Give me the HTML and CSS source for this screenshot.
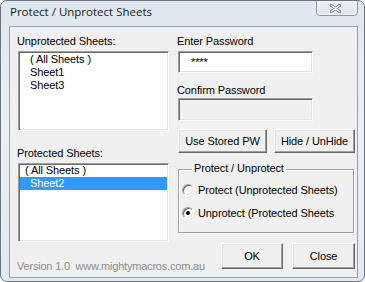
FILE: index.html
```html
<!DOCTYPE html>
<html>
<head>
<meta charset="utf-8">
<link rel="stylesheet" href="styles.css">
</head>
<body>
<div class="window">
  <div class="titlebar">
    <span class="title">Protect / Unprotect Sheets</span>
    <div class="close-x">
      <svg width="11" height="9" viewBox="0 0 11 9">
        <path d="M1.5 1.5 L9.5 7.5 M9.5 1.5 L1.5 7.5" stroke="#838c98" stroke-width="3.2" stroke-linecap="round" fill="none"/>
        <path d="M1.5 1.5 L9.5 7.5 M9.5 1.5 L1.5 7.5" stroke="#f6f8fa" stroke-width="1.4" stroke-linecap="round" fill="none"/>
      </svg>
    </div>
  </div>
  <div class="client">
    <div class="main">
      <div class="col-left">
        <div class="label">Unprotected Sheets:</div>
        <div class="listbox lb1">
          <div class="item">( All Sheets )</div>
          <div class="item">Sheet1</div>
          <div class="item">Sheet3</div>
        </div>
        <div class="label label-gap">Protected Sheets:</div>
        <div class="listbox lb2">
          <div class="item item-all">( All Sheets )</div>
          <div class="item selected">Sheet2</div>
        </div>
      </div>
      <div class="col-right">
        <div class="label">Enter Password</div>
        <div class="textbox pw">****</div>
        <div class="label label-gap2">Confirm Password</div>
        <div class="textbox confirm"></div>
        <div class="btnrow">
          <div class="btn btn-stored">Use Stored PW</div>
          <div class="btn btn-hide">Hide / UnHide</div>
        </div>
        <div class="group">
          <div class="legend">Protect / Unprotect</div>
          <div class="radio radio-first"><span class="rb"></span>Protect (Unprotected Sheets)</div>
          <div class="radio"><span class="rb checked"></span>Unprotect (Protected Sheets</div>
        </div>
      </div>
    </div>
    <div class="footer">
      <div class="version">Version 1.0 &nbsp;www.mightymacros.com.au</div>
      <div class="actions">
        <div class="btn btn-ok">OK</div>
        <div class="btn btn-close">Close</div>
      </div>
    </div>
  </div>
</div>
</body>
</html>
```
FILE: styles.css
```css
html, body {
  margin: 0;
  background: #ffffff;
}
body {
  font-family: "Liberation Sans", Arial, sans-serif;
  font-size: 11px;
  color: #000;
}
.window {
  width: 365px;
  height: 282px;
  box-sizing: border-box;
  border: 1px solid #6c747e;
  border-radius: 7px;
  background: linear-gradient(180deg, #dfe7ef 0%, #eaf0f5 45%, #e2e9f0 100%);
  display: flex;
  flex-direction: column;
  overflow: hidden;
}
.titlebar {
  height: 25px;
  flex-shrink: 0;
  display: flex;
  align-items: flex-start;
}
.title {
  font-family: "Open Sans", "Noto Sans", sans-serif;
  font-size: 11.5px;
  line-height: 22px;
  padding-left: 9px;
  color: #1b1b1b;
  white-space: nowrap;
}
.close-x {
  margin-left: auto;
  margin-right: 6px;
  margin-top: -2px;
  width: 42px;
  height: 17px;
  box-sizing: border-box;
  border: 1px solid #8c97a4;
  border-radius: 0 0 4px 4px;
  background: linear-gradient(180deg, #eef2f6, #dde4eb);
  box-shadow: inset 0 0 0 1px rgba(255,255,255,0.6);
  display: flex;
  justify-content: center;
  align-items: center;
  padding: 2px 3px 0 0;
}
.client {
  margin-left: 8px;
  width: 349px;
  height: 252px;
  box-sizing: border-box;
  border: 1px solid #97a2ae;
  background: #f0f0f0;
  padding: 7px 0 0 8px;
  letter-spacing: -0.1px;
}
.main {
  display: flex;
  gap: 9px;
}
.col-left {
  width: 151px;
}
.col-right {
  width: 177px;
}
.label {
  line-height: 14px;
  margin-left: -1px;
  white-space: nowrap;
}
.label-gap {
  margin-top: 15px;
}
.label-gap2 {
  margin-top: 10px;
}
.listbox {
  box-sizing: border-box;
  width: 151px;
  background: #fff;
  border: 1px solid;
  border-color: #a0a0a0 #ffffff #ffffff #a0a0a0;
  box-shadow: inset 1px 1px 0 #696969, inset -1px -1px 0 #e3e3e3;
  padding: 1px;
  margin-top: 3px;
}
.lb1 {
  height: 80px;
}
.lb2 {
  height: 79px;
  padding-top: 0;
}
.item {
  line-height: 13px;
  padding-left: 10px;
  white-space: nowrap;
}
.item-all {
  padding-left: 5px;
}
.selected {
  background: #3399ff;
  color: #fff;
}
.textbox {
  box-sizing: border-box;
  width: 135px;
  border: 1px solid;
  border-color: #a0a0a0 #ffffff #ffffff #a0a0a0;
  box-shadow: inset 1px 1px 0 #696969, inset -1px -1px 0 #e3e3e3;
  background: #fff;
}
.pw {
  height: 22px;
  margin-top: 3px;
  padding-left: 12px;
  line-height: 20px;
}
.confirm {
  height: 23px;
  margin-top: 1px;
  background: #f0f0f0;
}
.btn {
  box-sizing: border-box;
  display: flex;
  align-items: center;
  justify-content: center;
  border: 1px solid;
  border-color: #ffffff #696969 #696969 #ffffff;
  box-shadow: inset -1px -1px 0 #a0a0a0, inset 1px 1px 0 #e3e3e3;
  background: #f0f0f0;
  white-space: nowrap;
}
.btnrow {
  display: flex;
  gap: 7px;
  margin-top: 8px;
}
.btn-stored {
  width: 89px;
  height: 24px;
}
.btn-hide {
  width: 81px;
  height: 24px;
}
.group {
  box-sizing: border-box;
  width: 176px;
  height: 64px;
  margin-top: 16px;
  border: 1px solid #a0a0a0;
  box-shadow: inset 1px 1px 0 #ffffff, 1px 1px 0 #ffffff;
  padding: 0 0 0 3px;
}
.legend {
  width: max-content;
  margin: -9px 0 0 10px;
  padding: 0 2px;
  line-height: 14px;
  background: #f0f0f0;
}
.radio {
  display: flex;
  align-items: center;
  gap: 4px;
  height: 18px;
  margin-top: 5px;
  white-space: nowrap;
}
.radio-first {
  margin-top: 6px;
}
.rb {
  box-sizing: border-box;
  width: 12px;
  height: 12px;
  border-radius: 50%;
  border: 1px solid;
  border-color: #a0a0a0 #ffffff #ffffff #a0a0a0;
  box-shadow: inset 1px 1px 0 #696969, inset -1px -1px 0 #e3e3e3;
  background: #fff;
  display: flex;
  align-items: center;
  justify-content: center;
  flex-shrink: 0;
}
.rb.checked::after {
  content: "";
  width: 4px;
  height: 4px;
  border-radius: 50%;
  background: #000;
}
.footer {
  display: flex;
  justify-content: space-between;
  margin-left: -1px;
  padding-right: 2px;
}
.version {
  margin-top: 17px;
  line-height: 14px;
  color: #8d8d8d;
  letter-spacing: -0.2px;
  white-space: nowrap;
}
.actions {
  display: flex;
  gap: 9px;
  margin-top: 1px;
}
.btn-ok {
  width: 62px;
  height: 26px;
}
.btn-close {
  width: 63px;
  height: 26px;
}
```
